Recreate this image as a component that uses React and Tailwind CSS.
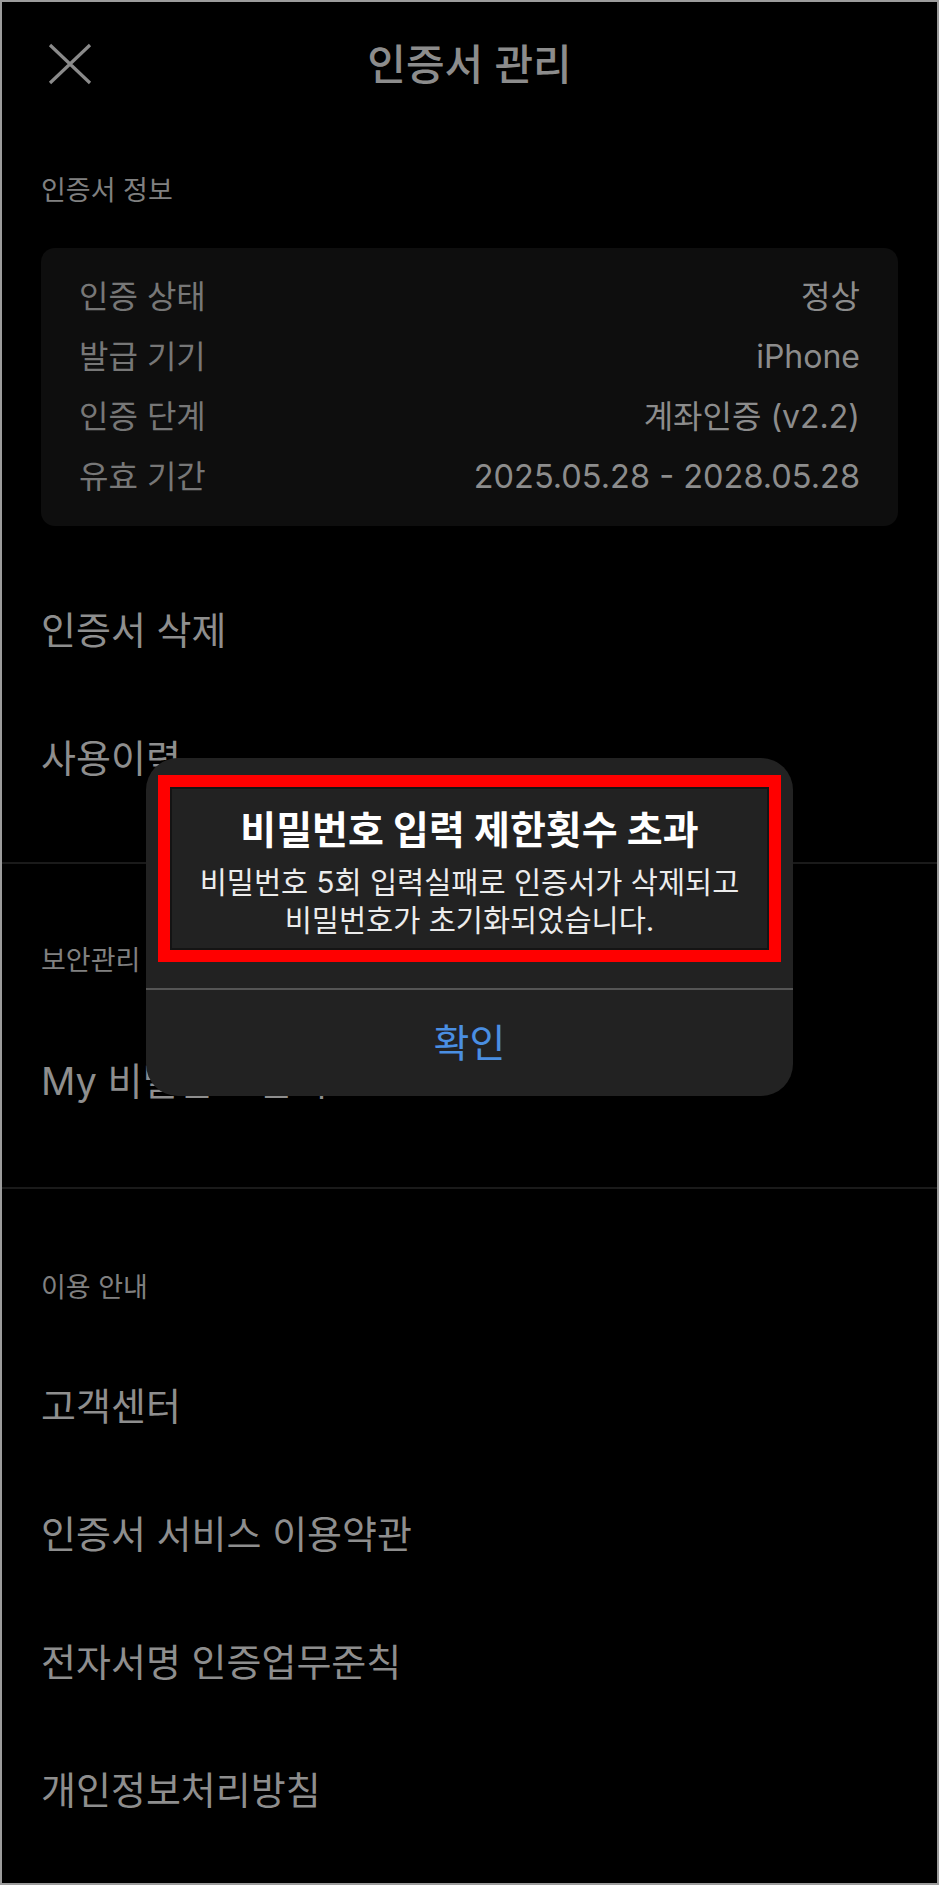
import React from "react";

function Row({ label, value }) {
  return (
    <div className="flex h-[60px] items-center justify-between">
      <span className="text-[32px] text-[#777777]">{label}</span>
      <span className="text-[32px] text-[#8c8c8c]">{value}</span>
    </div>
  );
}

function Item({ children }) {
  return (
    <div className="flex h-[128px] items-center px-[39px] text-[38px] text-[#8e8e8e]">
      {children}
    </div>
  );
}

function SectionLabel({ children, className = "" }) {
  return (
    <div className={"h-[30px] px-[39px] text-[27px] leading-[30px] text-[#808080] " + className}>
      {children}
    </div>
  );
}

export default function App() {
  return (
    <div className="relative box-border h-[1885px] w-[939px] overflow-hidden border-2 border-[#9c9c9c] bg-black font-['Inter','Noto_Sans_CJK_KR',sans-serif]">
      {/* Header */}
      <div className="grid h-[124px] grid-cols-[1fr_auto_1fr] items-center px-[46px]">
        <div className="flex items-center">
          <svg width="44" height="42" viewBox="0 0 44 42" fill="none">
            <path d="M2 2 L42 40 M42 2 L2 40" stroke="#8a8a8a" strokeWidth="3.2" />
          </svg>
        </div>
        <div className="text-[42px] font-medium text-[#8c8c8c]">인증서 관리</div>
        <div />
      </div>

      <SectionLabel className="mt-[50px]">인증서 정보</SectionLabel>

      <div className="mx-[39px] mt-[42px] rounded-[14px] bg-[#0e0e0e] px-[38px] py-[19px]">
        <Row label="인증 상태" value="정상" />
        <Row label="발급 기기" value="iPhone" />
        <Row label="인증 단계" value="계좌인증 (v2.2)" />
        <div className="flex h-[60px] items-center justify-between">
          <span className="text-[32px] text-[#777777]">유효 기간</span>
          <span className="text-[32.5px] text-[#8c8c8c]">2025.05.28 - 2028.05.28</span>
        </div>
      </div>

      <div className="mt-[40px]">
        <Item>인증서 삭제</Item>
        <Item>사용이력</Item>
      </div>

      <div className="mt-[40px] h-[2px] bg-[#1a1a1a]" />

      <SectionLabel className="mt-[82px]">보안관리</SectionLabel>
      <div className="mt-[41px]">
        <Item>My 비밀번호 관리</Item>
      </div>

      <div className="mt-[42px] h-[2px] bg-[#1a1a1a]" />

      <SectionLabel className="mt-[84px]">이용 안내</SectionLabel>
      <div className="mt-[39px]">
        <Item>고객센터</Item>
        <Item>인증서 서비스 이용약관</Item>
        <Item>전자서명 인증업무준칙</Item>
        <Item>개인정보처리방침</Item>
      </div>

      {/* Alert dialog */}
      <div className="absolute left-[144px] top-[756px] w-[647px] overflow-hidden rounded-[32px] bg-[#222222]">
        <div className="mx-[12px] mt-[17px] border-[12px] border-[#ff0000]">
          <div className="border-2 border-[#141414] bg-[#222222] px-[6px] pb-[9px] pt-[18px] text-center">
            <div className="text-[39px] font-bold leading-[46px] text-white">
              비밀번호 입력 제한횟수 초과
            </div>
            <div className="mt-[10px] text-[29.5px] leading-[38px] text-[#ececec]">
              비밀번호 5회 입력실패로 인증서가 삭제되고
              <br />
              비밀번호가 초기화되었습니다.
            </div>
          </div>
        </div>
        <div className="mt-[26px] h-[2px] bg-[#555555]" />
        <div className="flex h-[106px] items-center justify-center text-[39px] text-[#4a8fe2]">
          확인
        </div>
      </div>
    </div>
  );
}
